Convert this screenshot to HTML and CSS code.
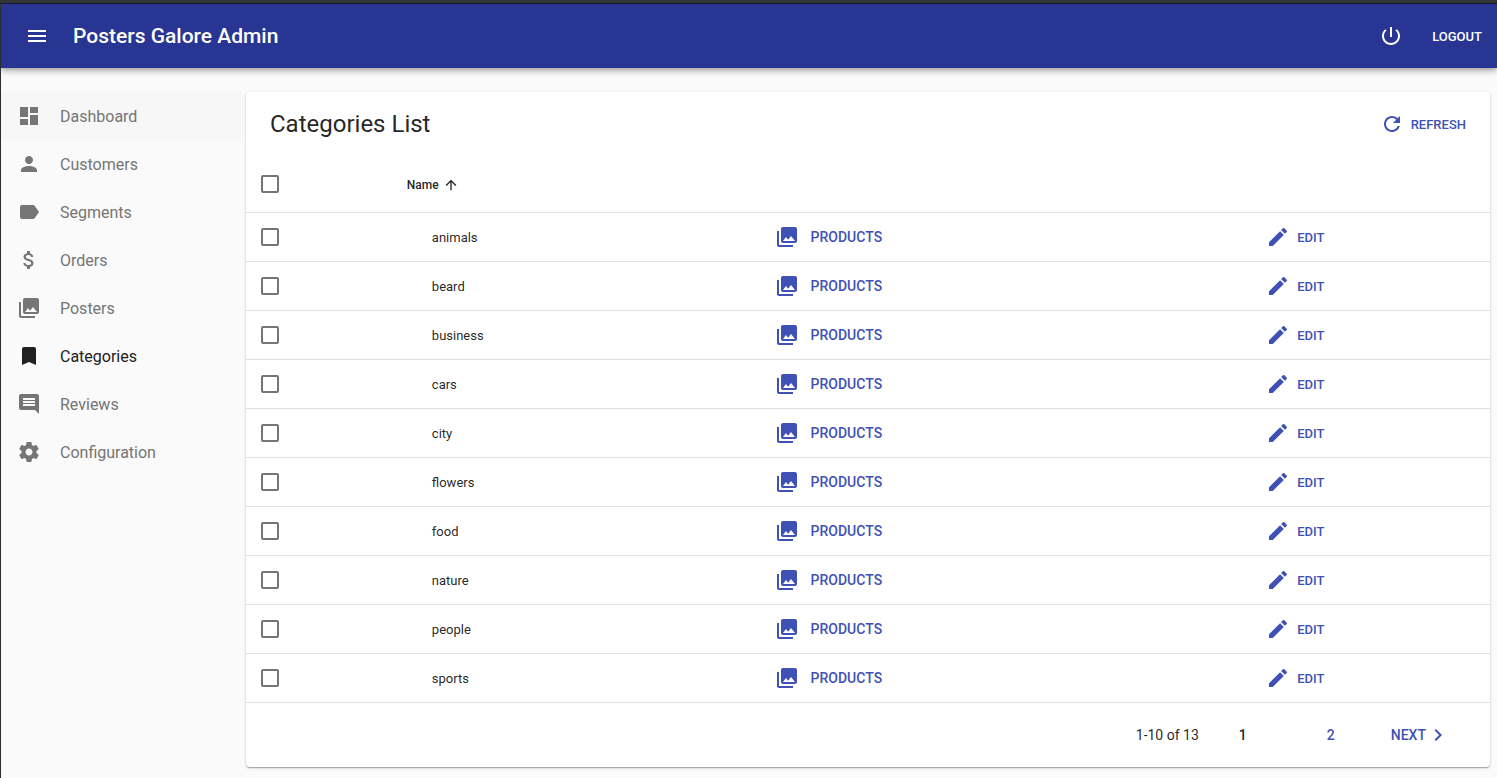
FILE: index.html
```html
<!DOCTYPE html>
<html lang="en">
<head>
<meta charset="utf-8">
<meta name="viewport" content="width=device-width, initial-scale=1">
<title>Posters Galore Admin</title>
<link rel="stylesheet" href="styles.css">
</head>
<body>
<svg class="sprite" aria-hidden="true">
  <symbol id="i-menu" viewBox="0 0 24 24"><path d="M3 18h18v-2H3v2zm0-5h18v-2H3v2zm0-7v2h18V6H3z"/></symbol>
  <symbol id="i-power" viewBox="0 0 24 24"><path d="M13 3h-2v10h2V3zm4.830 2.170-1.420 1.420C17.990 7.860 19 9.810 19 12c0 3.870-3.130 7-7 7s-7-3.130-7-7c0-2.190 1.010-4.140 2.580-5.420L6.170 5.170C4.230 6.820 3 9.260 3 12c0 4.970 4.030 9 9 9s9-4.030 9-9c0-2.740-1.230-5.180-3.170-6.830z"/></symbol>
  <symbol id="i-dashboard" viewBox="0 0 24 24"><path d="M3 13h8V3H3v10zm0 8h8v-6H3v6zm10 0h8V11h-8v10zm0-18v6h8V3h-8z"/></symbol>
  <symbol id="i-person" viewBox="0 0 24 24"><path d="M12 12c2.210 0 4-1.790 4-4s-1.790-4-4-4-4 1.790-4 4 1.790 4 4 4zm0 2c-2.670 0-8 1.340-8 4v2h16v-2c0-2.660-5.330-4-8-4z"/></symbol>
  <symbol id="i-label" viewBox="0 0 24 24"><path d="M17.630 5.840C17.270 5.330 16.670 5 16 5L5 5.010C3.900 5.010 3 5.900 3 7v10c0 1.100.9 1.990 2 1.990L16 19c.67 0 1.270-.33 1.630-.84L22 12l-4.370-6.160z"/></symbol>
  <symbol id="i-money" viewBox="0 0 24 24"><path d="M11.800 10.900c-2.270-.59-3-1.200-3-2.150 0-1.090 1.010-1.850 2.700-1.850 1.780 0 2.440.85 2.500 2.100h2.210c-.07-1.720-1.120-3.300-3.210-3.810V3h-3v2.160c-1.940.42-3.500 1.680-3.500 3.610 0 2.310 1.910 3.460 4.700 4.130 2.500.6 3 1.480 3 2.410 0 .69-.49 1.790-2.700 1.790-2.060 0-2.870-.92-2.980-2.100h-2.200c.12 2.190 1.760 3.420 3.680 3.830V21h3v-2.150c1.950-.37 3.500-1.500 3.500-3.550 0-2.840-2.430-3.810-4.700-4.400z"/></symbol>
  <symbol id="i-collections" viewBox="0 0 24 24"><path d="M22 16V4c0-1.100-.9-2-2-2H8c-1.100 0-2 .9-2 2v12c0 1.100.9 2 2 2h12c1.100 0 2-.9 2-2zm-11-4l2.030 2.710L16 11l4 5H8l3-4zM2 6v14c0 1.100.9 2 2 2h14v-2H4V6H2z"/></symbol>
  <symbol id="i-bookmark" viewBox="0 0 24 24"><path d="M17 3H7c-1.100 0-1.990.9-1.990 2L5 21l7-3 7 3V5c0-1.100-.9-2-2-2z"/></symbol>
  <symbol id="i-comment" viewBox="0 0 24 24"><path d="M21.990 4c0-1.100-.89-2-1.990-2H4c-1.100 0-2 .9-2 2v12c0 1.100.9 2 2 2h14l4 4-.01-18zM18 14H6v-2h12v2zm0-3H6V9h12v2zm0-3H6V6h12v2z"/></symbol>
  <symbol id="i-settings" viewBox="0 0 24 24"><path d="M19.430 12.980c.04-.32.07-.64.07-.98s-.03-.66-.07-.98l2.110-1.650c.19-.15.24-.42.12-.64l-2-3.460c-.12-.22-.39-.3-.61-.22l-2.490 1c-.52-.4-1.080-.73-1.690-.98l-.38-2.650C14.460 2.180 14.250 2 14 2h-4c-.25 0-.46.18-.49.42l-.38 2.650c-.61.25-1.170.59-1.690.98l-2.490-1c-.23-.09-.49 0-.61.22l-2 3.460c-.13.22-.07.49.12.64l2.110 1.650c-.04.32-.07.65-.07.98s.03.66.07.98l-2.110 1.650c-.19.15-.24.42-.12.64l2 3.460c.12.22.39.3.61.22l2.490-1c.52.4 1.080.73 1.690.98l.38 2.650c.03.24.24.42.49.42h4c.25 0 .46-.18.49-.42l.38-2.650c.61-.25 1.170-.59 1.690-.98l2.490 1c.23.09.49 0 .61-.22l2-3.460c.12-.22.07-.49-.12-.64l-2.110-1.650zM12 15.500c-1.930 0-3.500-1.570-3.500-3.500s1.570-3.500 3.500-3.500 3.500 1.570 3.500 3.500-1.570 3.500-3.500 3.500z"/></symbol>
  <symbol id="i-refresh" viewBox="0 0 24 24"><path d="M17.650 6.350C16.200 4.900 14.210 4 12 4c-4.420 0-7.990 3.580-7.990 8s3.570 8 7.990 8c3.730 0 6.840-2.550 7.730-6h-2.080c-.82 2.330-3.040 4-5.650 4-3.310 0-6-2.690-6-6s2.690-6 6-6c1.660 0 3.140.69 4.220 1.780L13 11h7V4l-2.350 2.350z"/></symbol>
  <symbol id="i-up" viewBox="0 0 24 24"><path d="M4 12l1.410 1.410L11 7.830V20h2V7.830l5.580 5.590L20 12l-8-8-8 8z"/></symbol>
  <symbol id="i-edit" viewBox="0 0 24 24"><path d="M3 17.250V21h3.750L17.810 9.940l-3.750-3.750L3 17.250zM20.710 7.040c.39-.39.39-1.020 0-1.410l-2.340-2.340c-.39-.39-1.020-.39-1.410 0l-1.830 1.830 3.750 3.750 1.830-1.830z"/></symbol>
  <symbol id="i-right" viewBox="0 0 24 24"><path d="M10 6L8.590 7.410 13.170 12l-4.580 4.590L10 18l6-6z"/></symbol>
</svg>

<header class="appbar">
  <button class="icon-button" type="button" aria-label="Toggle menu"><svg class="icon"><use href="#i-menu"/></svg></button>
  <h1 class="appbar-title">Posters Galore Admin</h1>
  <button class="logout" type="button"><svg class="icon"><use href="#i-power"/></svg>Logout</button>
</header>

<div class="layout">
  <nav class="sidebar">
    <a class="nav-item hovered" href="#dashboard"><svg class="icon"><use href="#i-dashboard"/></svg>Dashboard</a>
    <a class="nav-item" href="#customers"><svg class="icon"><use href="#i-person"/></svg>Customers</a>
    <a class="nav-item" href="#segments"><svg class="icon"><use href="#i-label"/></svg>Segments</a>
    <a class="nav-item" href="#orders"><svg class="icon"><use href="#i-money"/></svg>Orders</a>
    <a class="nav-item" href="#posters"><svg class="icon"><use href="#i-collections"/></svg>Posters</a>
    <a class="nav-item active" href="#categories" aria-current="page"><svg class="icon"><use href="#i-bookmark"/></svg>Categories</a>
    <a class="nav-item" href="#reviews"><svg class="icon"><use href="#i-comment"/></svg>Reviews</a>
    <a class="nav-item" href="#configuration"><svg class="icon"><use href="#i-settings"/></svg>Configuration</a>
  </nav>

  <main class="card">
    <div class="card-header">
      <h2 class="card-title">Categories List</h2>
      <button class="action" type="button"><svg class="icon"><use href="#i-refresh"/></svg>Refresh</button>
    </div>
    <table class="grid">
      <colgroup><col class="col-select"><col class="col-name"><col class="col-products"><col></colgroup>
      <thead>
        <tr>
          <th class="cell-select"><input class="check" type="checkbox" aria-label="Select all"></th>
          <th class="head-name"><button class="sort" type="button">Name<svg class="sort-icon"><use href="#i-up"/></svg></button></th>
          <th></th>
          <th></th>
        </tr>
      </thead>
      <tbody id="rows"></tbody>
    </table>
    <div class="pagination">
      <span class="range">1-10 of 13</span>
      <button class="page current" type="button" aria-current="page">1</button>
      <button class="page" type="button">2</button>
      <button class="next" type="button">Next<svg class="icon"><use href="#i-right"/></svg></button>
    </div>
  </main>
</div>
<script src="app.js"></script>
</body>
</html>
```
FILE: app.js
```js
const categories = ["animals", "beard", "business", "cars", "city", "flowers", "food", "nature", "people", "sports"];

document.getElementById("rows").innerHTML = categories.map((name) => `
  <tr>
    <td class="cell-select"><input class="check" type="checkbox" aria-label="Select ${name}"></td>
    <td class="cell-name">${name}</td>
    <td class="cell-products"><a class="action products" href="#products-${name}"><svg class="icon"><use href="#i-collections"/></svg>Products</a></td>
    <td class="cell-edit"><a class="action" href="#edit-${name}"><svg class="icon"><use href="#i-edit"/></svg>Edit</a></td>
  </tr>`).join("");
```
FILE: styles.css
```css
* {
  box-sizing: border-box;
}

body {
  margin: 0;
  min-height: 100vh;
  border-top: 3px solid #333639;
  border-left: 1px solid #2b2d30;
  background: #fafafa;
  color: rgba(0, 0, 0, 0.87);
  font-family: Roboto, "Liberation Sans", sans-serif;
  font-size: 13px;
}

button {
  padding: 0;
  border: 0;
  background: none;
  color: inherit;
  font: inherit;
  cursor: pointer;
}

a {
  color: inherit;
  text-decoration: none;
}

.sprite {
  display: none;
}

.icon {
  flex: none;
  width: 24px;
  height: 24px;
  fill: currentColor;
}

.appbar {
  display: flex;
  align-items: center;
  height: 65px;
  padding: 0 15px 0 24px;
  border-top: 1px solid #16192b;
  background: #283593;
  color: #fff;
  box-shadow: 0 2px 4px -1px rgba(0, 0, 0, 0.2), 0 4px 5px rgba(0, 0, 0, 0.14), 0 1px 10px rgba(0, 0, 0, 0.12);
}

.icon-button {
  display: flex;
}

.appbar-title {
  flex: 1;
  margin: 0;
  padding-left: 24px;
  font-size: 21px;
  font-weight: 500;
  line-height: 33px;
}

.logout {
  display: flex;
  align-items: center;
  gap: 29px;
  font-weight: 500;
  text-transform: uppercase;
}

.layout {
  display: flex;
  align-items: flex-start;
  gap: 5px;
  padding: 24px 7px 11px 0;
}

.sidebar {
  flex: none;
  width: 240px;
}

.nav-item {
  display: flex;
  align-items: center;
  gap: 19px;
  height: 48px;
  padding-left: 16px;
  color: #757575;
  font-size: 16px;
}

.nav-item.hovered {
  background: #f7f7f7;
}

.nav-item.active {
  color: #212121;
}

.card {
  flex: 1;
  border-radius: 4px;
  background: #fff;
  box-shadow: 0 1px 3px rgba(0, 0, 0, 0.2), 0 1px 1px rgba(0, 0, 0, 0.14), 0 2px 1px -1px rgba(0, 0, 0, 0.12);
}

.card-header {
  display: flex;
  align-items: center;
  justify-content: space-between;
  height: 64px;
  padding: 0 24px;
}

.card-title {
  margin: 0;
  font-size: 24px;
  font-weight: 400;
  line-height: 33px;
}

.action {
  display: inline-flex;
  align-items: center;
  gap: 7px;
  color: #3f51b5;
  font-weight: 500;
  text-transform: uppercase;
  vertical-align: middle;
}

.products {
  gap: 12px;
  font-size: 14px;
  line-height: 17px;
}

.grid {
  width: 100%;
  table-layout: fixed;
  border-collapse: separate;
  border-spacing: 0;
}

.col-select {
  width: 11%;
}

.col-name {
  width: 29%;
}

.col-products {
  width: 40%;
}

.grid th,
.grid td {
  height: 49px;
  padding: 0;
  border-bottom: 1px solid #e0e0e0;
  text-align: left;
}

.grid th {
  height: 57px;
}

.grid .cell-select {
  padding-left: 15px;
}

.grid .head-name {
  padding-left: 24px;
}

.grid .cell-name {
  padding-left: 49px;
}

.grid .cell-products {
  padding-left: 31px;
}

.grid .cell-edit {
  padding-left: 25px;
}

.check {
  display: block;
  appearance: none;
  width: 18px;
  height: 18px;
  margin: 0;
  border: 2px solid #757575;
  border-radius: 2px;
}

.check:checked {
  background: #3f51b5;
}

.sort {
  display: flex;
  align-items: center;
  gap: 4px;
  padding-top: 2px;
  font-size: 12px;
  font-weight: 500;
}

.sort-icon {
  width: 16px;
  height: 16px;
  fill: currentColor;
}

.pagination {
  display: flex;
  align-items: center;
  justify-content: flex-end;
  height: 64px;
  padding-right: 40px;
  font-size: 14px;
}

.page {
  width: 88px;
}

.page,
.next {
  height: 36px;
  color: #3f51b5;
  font-weight: 500;
  line-height: 17px;
}

.page.current {
  color: rgba(0, 0, 0, 0.87);
}

.next {
  display: flex;
  align-items: center;
  margin-left: 16px;
  text-transform: uppercase;
}
```
